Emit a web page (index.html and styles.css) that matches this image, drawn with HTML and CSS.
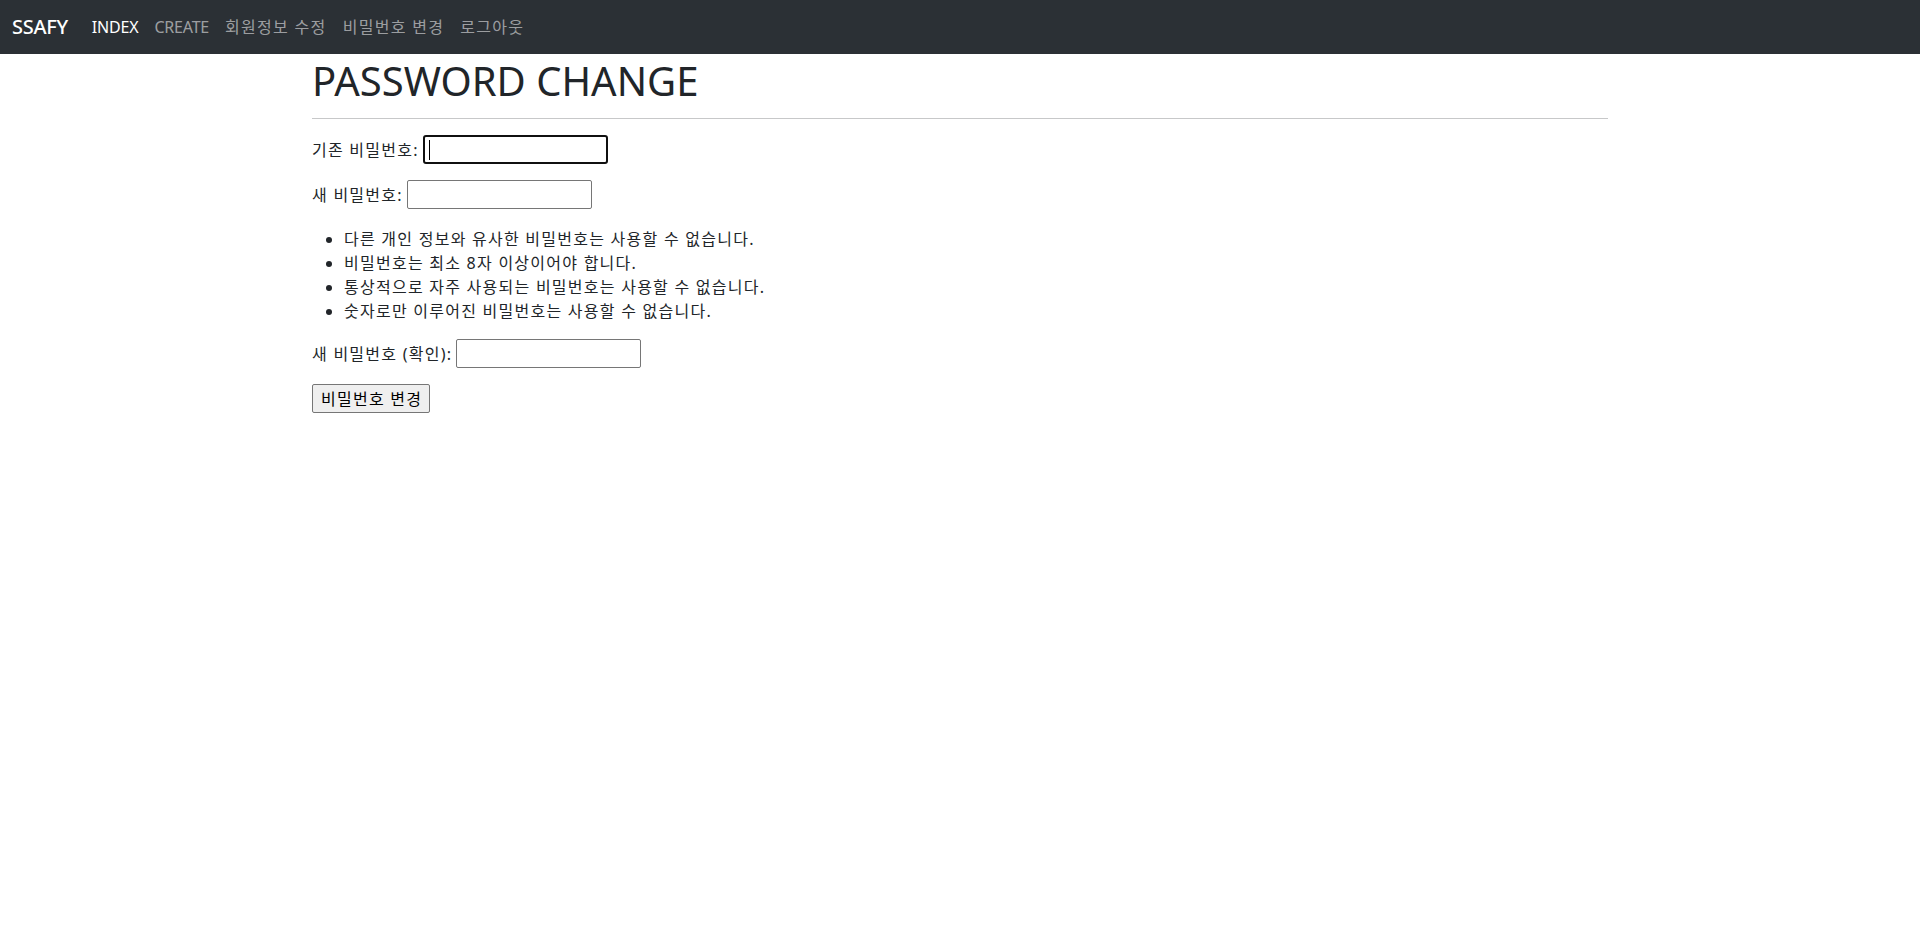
FILE: index.html
```html
<!DOCTYPE html>
<html lang="ko">
<head>
<meta charset="utf-8">
<title>Password Change</title>
<link rel="stylesheet" href="styles.css">
</head>
<body>
<nav class="navbar">
  <a class="brand" href="#">SSAFY</a>
  <ul class="nav">
    <li><a class="nav-link active" href="#">INDEX</a></li>
    <li><a class="nav-link" href="#">CREATE</a></li>
    <li><a class="nav-link ko" href="#">회원정보 수정</a></li>
    <li><a class="nav-link ko" href="#">비밀번호 변경</a></li>
    <li><a class="nav-link ko" href="#">로그아웃</a></li>
  </ul>
</nav>
<main class="container">
  <h1 class="title">PASSWORD CHANGE</h1>
  <hr class="divider">
  <form class="form">
    <p class="row"><label class="ko" for="old">기존 비밀번호:</label> <input class="field focused" type="password" id="old"></p>
    <p class="row"><label class="ko" for="new1">새 비밀번호:</label> <input class="field" type="password" id="new1"></p>
    <ul class="help ko">
      <li>다른 개인 정보와 유사한 비밀번호는 사용할 수 없습니다.</li>
      <li>비밀번호는 최소 8자 이상이어야 합니다.</li>
      <li>통상적으로 자주 사용되는 비밀번호는 사용할 수 없습니다.</li>
      <li>숫자로만 이루어진 비밀번호는 사용할 수 없습니다.</li>
    </ul>
    <p class="row"><label class="ko" for="new2">새 비밀번호 (확인):</label> <input class="field" type="password" id="new2"></p>
    <button class="submit ko" type="button">비밀번호 변경</button>
  </form>
</main>
</body>
</html>
```

FILE: styles.css
```css
* { box-sizing: border-box; }
html, body { margin: 0; padding: 0; }
body {
  font-family: "Noto Sans", "Noto Sans CJK KR", sans-serif;
  font-size: 16px;
  line-height: 1.5;
  color: #212529;
  background: #fff;
}
.ko { letter-spacing: 1.25px; }
.navbar {
  height: 54px;
  background: #2b3035;
  display: flex;
  align-items: center;
  padding: 0 12px;
}
.brand {
  font-size: 20px;
  color: #fff;
  text-decoration: none;
  margin-right: 16px;
  font-weight: 500;
  letter-spacing: -0.3px;
}
.nav {
  list-style: none;
  margin: 0;
  padding: 0;
  display: flex;
}
.nav-link {
  display: block;
  padding: 8px 8px;
  color: rgba(255,255,255,0.55);
  text-decoration: none;
  letter-spacing: -0.2px;
}
.nav-link.ko { letter-spacing: 1.3px; }
.nav-link.active { color: #fff; }
.container {
  max-width: 1320px;
  margin: 0 auto;
  padding: 0 12px;
}
.title {
  font-size: 40px;
  font-weight: 400;
  line-height: 43px;
  padding-top: 5px;
  margin: 0 0 8px;
}
.divider {
  margin: 16px 0;
  border: 0;
  border-top: 1px solid #212529;
  opacity: 0.25;
}
.form { margin: 0; }
.row { margin: 0 0 16px; }
.field {
  font: inherit;
  letter-spacing: normal;
  width: 185px;
  height: 29px;
  padding: 1px 2px;
  border: 1px solid #767676;
  border-radius: 2px;
  background: #fff;
  vertical-align: baseline;
}
.field.focused {
  border: 2px solid #101010;
  border-radius: 3px;
  background: linear-gradient(#000, #000) no-repeat 4px 3px / 1px 20px, #fff;
}
.help {
  margin: 0 0 16px;
  padding: 2px 0 0 32px;
}
.submit {
  font: inherit;
  letter-spacing: 1.25px;
  height: 29px;
  padding: 0 7px 0 8px;
  border: 1px solid #767676;
  border-radius: 2px;
  background: #efefef;
  color: #000;
}
```
